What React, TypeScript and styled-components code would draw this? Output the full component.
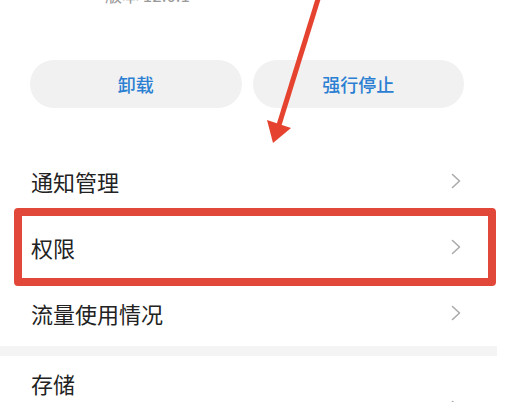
import React from 'react';
import styled, { createGlobalStyle } from 'styled-components';

const GlobalStyle = createGlobalStyle`
  html, body {
    margin: 0;
    padding: 0;
    background: #ffffff;
    overflow: hidden;
  }
  body {
    font-family: "Noto Sans CJK SC", "Noto Sans", sans-serif;
  }
`;

const Page = styled.div`
  position: relative;
  width: 497px;
  height: 402px;
  background: #fff;
  overflow: hidden;
`;

const Version = styled.div`
  display: flow-root;
  height: 60px;
  padding-left: 105px;
  font-size: 17px;
  line-height: 20px;
  color: #9a9a9a;

  span {
    display: block;
    margin-top: -15px;
  }
`;

const ButtonRow = styled.div`
  display: grid;
  grid-template-columns: 1fr 1fr;
  gap: 11px;
  padding: 0 33px 0 30px;
`;

const PillButton = styled.button`
  height: 48px;
  border: none;
  border-radius: 24px;
  background: #f1f1f1;
  color: #2b7fd2;
  font-family: "Noto Sans CJK SC", sans-serif;
  font-size: 18px;
  font-weight: 500;
  padding: 0;
`;

const List = styled.div`
  margin-top: 40px;
  display: flex;
  flex-direction: column;
`;

const Row = styled.div<{ tall?: boolean }>`
  position: relative;
  display: flex;
  align-items: ${({ tall }) => (tall ? 'flex-start' : 'center')};
  justify-content: space-between;
  height: ${({ tall }) => (tall ? '78px' : '66px')};
  padding: ${({ tall }) => (tall ? '13px 36px 0 31px' : '0 36px 0 31px')};
  box-sizing: border-box;
`;

const Label = styled.span`
  font-size: 22px;
  line-height: 28px;
  color: #222;
`;

const Chevron = styled.svg<{ low?: boolean }>`
  width: 10px;
  height: 16px;
  flex: none;
  margin-top: ${({ low }) => (low ? '31px' : '0')};
`;

const Divider = styled.div`
  height: 10px;
  background: #f4f4f4;
`;

const Highlight = styled.div`
  position: absolute;
  top: -6px;
  bottom: -6px;
  left: 14px;
  right: 1px;
  border: 8px solid #e2483a;
  border-radius: 4px;
  pointer-events: none;
`;

const ArrowLayer = styled.svg`
  position: absolute;
  top: 0;
  left: 0;
  width: 507px;
  height: 160px;
  pointer-events: none;
`;

const Arrow = () => (
  <Chevron viewBox="0 0 10 16">
    <path d="M1.5 1.5 L8.5 8 L1.5 14.5" fill="none" stroke="#ababab" strokeWidth="1.6" strokeLinecap="round" strokeLinejoin="round" />
  </Chevron>
);

const LowArrow = () => (
  <Chevron low viewBox="0 0 10 16">
    <path d="M1.5 1.5 L8.5 8 L1.5 14.5" fill="none" stroke="#ababab" strokeWidth="1.6" strokeLinecap="round" strokeLinejoin="round" />
  </Chevron>
);

const App: React.FC = () => {
  return (
    <Page>
      <GlobalStyle />
      <Version>
        <span>版本 12.0.1</span>
      </Version>
      <ButtonRow>
        <PillButton>卸载</PillButton>
        <PillButton>强行停止</PillButton>
      </ButtonRow>
      <List>
        <Row>
          <Label>通知管理</Label>
          <Arrow />
        </Row>
        <Row>
          <Label>权限</Label>
          <Arrow />
          <Highlight />
        </Row>
        <Row>
          <Label>流量使用情况</Label>
          <Arrow />
        </Row>
        <Divider />
        <Row tall>
          <Label>存储</Label>
          <LowArrow />
        </Row>
      </List>
      <ArrowLayer viewBox="0 0 507 160">
        <line x1="319" y1="-4" x2="279" y2="125" stroke="#e5432f" strokeWidth="5" />
        <polygon points="273,143 267,120 291,128" fill="#e5432f" />
      </ArrowLayer>
    </Page>
  );
};

export default App;
